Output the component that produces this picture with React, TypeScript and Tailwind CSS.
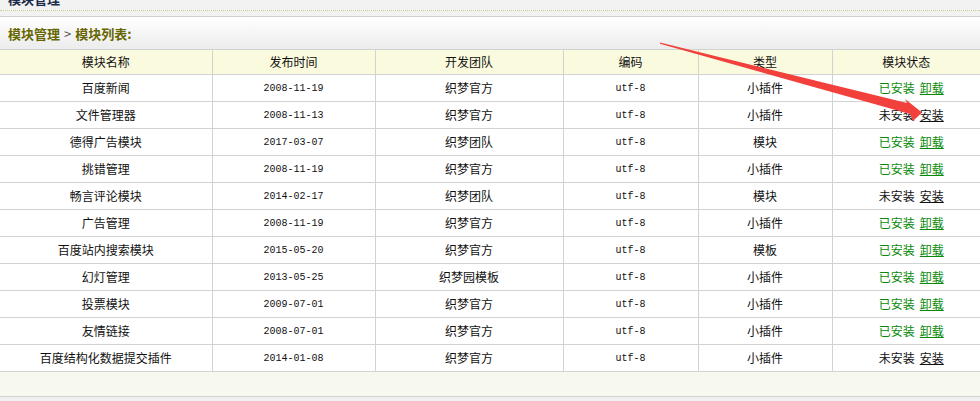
import React from "react";

type Row = {
  name: string;
  date: string;
  team: string;
  enc: string;
  kind: string;
  installed: boolean;
};

const rows: Row[] = [
  { name: "百度新闻", date: "2008-11-19", team: "织梦官方", enc: "utf-8", kind: "小插件", installed: true },
  { name: "文件管理器", date: "2008-11-13", team: "织梦官方", enc: "utf-8", kind: "小插件", installed: false },
  { name: "德得广告模块", date: "2017-03-07", team: "织梦团队", enc: "utf-8", kind: "模块", installed: true },
  { name: "挑错管理", date: "2008-11-19", team: "织梦官方", enc: "utf-8", kind: "小插件", installed: true },
  { name: "畅言评论模块", date: "2014-02-17", team: "织梦团队", enc: "utf-8", kind: "模块", installed: false },
  { name: "广告管理", date: "2008-11-19", team: "织梦官方", enc: "utf-8", kind: "小插件", installed: true },
  { name: "百度站内搜索模块", date: "2015-05-20", team: "织梦官方", enc: "utf-8", kind: "模板", installed: true },
  { name: "幻灯管理", date: "2013-05-25", team: "织梦园模板", enc: "utf-8", kind: "小插件", installed: true },
  { name: "投票模块", date: "2009-07-01", team: "织梦官方", enc: "utf-8", kind: "小插件", installed: true },
  { name: "友情链接", date: "2008-07-01", team: "织梦官方", enc: "utf-8", kind: "小插件", installed: true },
  { name: "百度结构化数据提交插件", date: "2014-01-08", team: "织梦官方", enc: "utf-8", kind: "小插件", installed: false },
];

const cjk = "font-['SimSun','Noto_Sans_CJK_SC',sans-serif]";
const mono = "font-['Liberation_Mono','DejaVu_Sans_Mono',monospace]";

const App = () => {
  return (
    <div className={`relative w-[980px] h-[401px] bg-[#f0f0f0] text-[12px] text-[#111] overflow-hidden ${cjk}`}>
      {/* top title, cut off */}
      <div className="h-[11px] overflow-hidden bg-[#f2f2f2] border-b border-dotted border-[#c9cf8f] pl-[8px]">
        <div className="-mt-[8px] text-[13px] font-bold text-[#1b2a4a] leading-[14px]">模块管理</div>
      </div>
      <div className="h-[6px] bg-[#f2f2f2] border-b border-[#cfcfcf]" />

      {/* breadcrumb */}
      <div className="h-[32px] flex items-center pt-[2px] pl-[8px] bg-gradient-to-b from-white to-[#ececec] text-[#666600] font-bold text-[13px]">
        模块管理 <span className="font-normal text-[#555] mx-[4px]">&gt;</span> 模块列表:
      </div>

      <table className="w-full border-collapse table-fixed">
        <colgroup>
          <col className="w-[212px]" />
          <col className="w-[163px]" />
          <col className="w-[188px]" />
          <col className="w-[135px]" />
          <col className="w-[134px]" />
          <col />
        </colgroup>
        <thead>
          <tr className="h-[25px] bg-[#fafadf]">
            {["模块名称", "发布时间", "开发团队", "编码", "类型", "模块状态"].map((h, i) => (
              <th
                key={h}
                className={`font-normal text-center border-y border-[#d2d2d2] ${i > 0 ? "border-l" : ""} border-[#d2d2d2] p-0`}
              >
                {h}
              </th>
            ))}
          </tr>
        </thead>
        <tbody className="bg-white">
          {rows.map((r) => (
            <tr key={r.name} className="h-[27px]">
              <td className="text-center border-b border-[#d2d2d2] p-0">{r.name}</td>
              <td className={`text-center border-b border-l border-[#d2d2d2] p-0 text-[10px] ${mono}`}>{r.date}</td>
              <td className="text-center border-b border-l border-[#d2d2d2] p-0">{r.team}</td>
              <td className={`text-center border-b border-l border-[#d2d2d2] p-0 text-[10px] ${mono}`}>{r.enc}</td>
              <td className="text-center border-b border-l border-[#d2d2d2] p-0">{r.kind}</td>
              <td className="text-center border-b border-l border-[#d2d2d2] p-0 pl-[10px]">
                {r.installed ? (
                  <span className="text-[#0a8a0a]">
                    已安装<span className="underline ml-[5px]">卸载</span>
                  </span>
                ) : (
                  <span>
                    未安装<span className="underline ml-[5px]">安装</span>
                  </span>
                )}
              </td>
            </tr>
          ))}
        </tbody>
      </table>

      {/* footer bar */}
      <div className="h-[25px] bg-[#f8f9ee] border-b border-[#d2d2d2]" />

      {/* annotation arrow */}
      <svg className="absolute left-0 top-0 pointer-events-none" width="980" height="401">
        <polygon
          points="660,42.5 907,103 905,99 922,112.5 913,121 910,114 660,43.8"
          fill="#f2403c"
        />
      </svg>
    </div>
  );
};

export default App;
